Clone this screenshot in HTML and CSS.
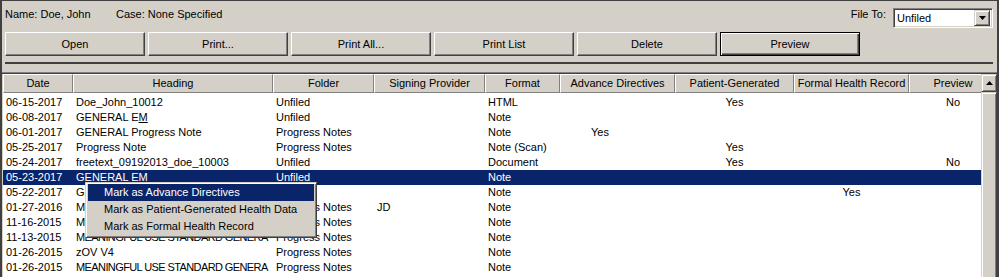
FILE: index.html
```html
<!DOCTYPE html>
<html>
<head>
<meta charset="utf-8">
<link rel="stylesheet" href="styles.css">
</head>
<body>
<div class="window">
  <div class="info">
    <span class="label name">Name: Doe, John</span>
    <span class="label">Case: None Specified</span>
    <span class="spacer"></span>
    <span class="label file-label">File To:</span>
    <div class="combo">
      <span class="combo-text">Unfiled</span>
      <span class="combo-btn"><svg width="7" height="4" viewBox="0 0 7 4"><path d="M0 0H7L3.5 4Z" fill="#000"/></svg></span>
    </div>
  </div>
  <div class="buttons">
    <div class="btn">Open</div>
    <div class="btn">Print...</div>
    <div class="btn">Print All...</div>
    <div class="btn">Print List</div>
    <div class="btn">Delete</div>
    <div class="btn btn-default">Preview</div>
  </div>
  <div class="splitter"></div>
  <div class="list">
    <div class="table">
      <div class="grid header">
        <div class="hcell">Date</div>
        <div class="hcell">Heading</div>
        <div class="hcell">Folder</div>
        <div class="hcell">Signing Provider</div>
        <div class="hcell">Format</div>
        <div class="hcell">Advance Directives</div>
        <div class="hcell">Patient-Generated</div>
        <div class="hcell">Formal Health Record</div>
        <div class="hcell">Preview</div>
      </div>
      <div class="rows">
        <div class="grid row"><div class="cell">06-15-2017</div><div class="cell">Doe_John_10012</div><div class="cell">Unfiled</div><div class="cell"></div><div class="cell">HTML</div><div class="cell adv"></div><div class="cell c">Yes</div><div class="cell c"></div><div class="cell c">No</div></div>
        <div class="grid row"><div class="cell">06-08-2017</div><div class="cell">GENERAL E<u>M</u></div><div class="cell">Unfiled</div><div class="cell"></div><div class="cell">Note</div><div class="cell adv"></div><div class="cell c"></div><div class="cell c"></div><div class="cell c"></div></div>
        <div class="grid row"><div class="cell">06-01-2017</div><div class="cell">GENERAL Progress Note</div><div class="cell">Progress Notes</div><div class="cell"></div><div class="cell">Note</div><div class="cell adv">Yes</div><div class="cell c"></div><div class="cell c"></div><div class="cell c"></div></div>
        <div class="grid row"><div class="cell">05-25-2017</div><div class="cell">Progress Note</div><div class="cell">Progress Notes</div><div class="cell"></div><div class="cell">Note (Scan)</div><div class="cell adv"></div><div class="cell c">Yes</div><div class="cell c"></div><div class="cell c"></div></div>
        <div class="grid row"><div class="cell">05-24-2017</div><div class="cell">freetext_09192013_doe_10003</div><div class="cell">Unfiled</div><div class="cell"></div><div class="cell">Document</div><div class="cell adv"></div><div class="cell c">Yes</div><div class="cell c"></div><div class="cell c">No</div></div>
        <div class="grid row selected"><div class="cell">05-23-2017</div><div class="cell">GENERAL EM</div><div class="cell">Unfiled</div><div class="cell"></div><div class="cell">Note</div><div class="cell adv"></div><div class="cell c"></div><div class="cell c"></div><div class="cell c"></div></div>
        <div class="grid row"><div class="cell">05-22-2017</div><div class="cell">GENERAL EM</div><div class="cell">Unfiled</div><div class="cell"></div><div class="cell">Note</div><div class="cell adv"></div><div class="cell c"></div><div class="cell c">Yes</div><div class="cell c"></div></div>
        <div class="grid row"><div class="cell">01-27-2016</div><div class="cell caps">MEANINGFUL USE STANDARD GENERA</div><div class="cell">Progress Notes</div><div class="cell">JD</div><div class="cell">Note</div><div class="cell adv"></div><div class="cell c"></div><div class="cell c"></div><div class="cell c"></div></div>
        <div class="grid row"><div class="cell">11-16-2015</div><div class="cell caps">MEANINGFUL USE STANDARD GENERA</div><div class="cell">Progress Notes</div><div class="cell"></div><div class="cell">Note</div><div class="cell adv"></div><div class="cell c"></div><div class="cell c"></div><div class="cell c"></div></div>
        <div class="grid row"><div class="cell">11-13-2015</div><div class="cell caps">MEANINGFUL USE STANDARD GENERA</div><div class="cell">Progress Notes</div><div class="cell"></div><div class="cell">Note</div><div class="cell adv"></div><div class="cell c"></div><div class="cell c"></div><div class="cell c"></div></div>
        <div class="grid row"><div class="cell">01-26-2015</div><div class="cell">zOV V4</div><div class="cell">Progress Notes</div><div class="cell"></div><div class="cell">Note</div><div class="cell adv"></div><div class="cell c"></div><div class="cell c"></div><div class="cell c"></div></div>
        <div class="grid row"><div class="cell">01-26-2015</div><div class="cell caps">MEANINGFUL USE STANDARD GENERA</div><div class="cell">Progress Notes</div><div class="cell"></div><div class="cell">Note</div><div class="cell adv"></div><div class="cell c"></div><div class="cell c"></div><div class="cell c"></div></div>
      </div>
    </div>
    <div class="scrollbar">
      <div class="sb-btn"><svg width="7" height="4" viewBox="0 0 7 4"><path d="M3.5 0L7 4H0Z" fill="#000"/></svg></div>
      <div class="sb-thumb"></div>
    </div>
  </div>
</div>
<div class="menu">
  <div class="mi active">Mark as Advance Directives</div>
  <div class="mi">Mark as Patient-Generated Health Data</div>
  <div class="mi">Mark as Formal Health Record</div>
</div>
</body>
</html>
```
FILE: styles.css
```css
* { box-sizing: border-box; }
html, body { margin: 0; padding: 0; }
body {
  width: 999px;
  height: 277px;
  overflow: hidden;
  background: #D4D0C8;
  font-family: "Liberation Sans", Arial, sans-serif;
  font-size: 11px;
  color: #000;
}
.window {
  height: 277px;
  border-top: 1px solid #404040;
  border-left: 2px solid #404040;
  border-right: 2px solid #404040;
  overflow: hidden;
}
.info { display: flex; height: 31px; }
.label { margin-top: 7px; line-height: 13px; white-space: nowrap; }
.name { padding-left: 3px; width: 114px; }
.spacer { flex: 1; }
.file-label { margin-right: 7px; }
.combo {
  margin-top: 7px;
  margin-right: 4px;
  width: 100px;
  height: 20px;
  background: #fff;
  border: 1px solid;
  border-color: #808080 #fff #fff #808080;
  box-shadow: inset 1px 1px #404040, inset -1px -1px #D4D0C8;
  display: flex;
  align-items: center;
  justify-content: space-between;
  padding: 2px;
}
.combo-text { padding-left: 1px; line-height: 14px; }
.combo-btn {
  width: 16px;
  height: 16px;
  background: #D4D0C8;
  border: 1px solid;
  border-color: #D4D0C8 #404040 #404040 #D4D0C8;
  box-shadow: inset 1px 1px #fff, inset -1px -1px #808080;
  display: flex;
  align-items: center;
  justify-content: center;
}
.combo-btn svg { display: block; }
.buttons { display: flex; gap: 3px; padding-left: 3px; height: 24px; }
.btn {
  width: 140px;
  height: 24px;
  background: #D4D0C8;
  border: 1px solid;
  border-color: #fff #404040 #404040 #fff;
  box-shadow: inset -1px -1px #808080;
  display: flex;
  align-items: center;
  justify-content: center;
  padding-bottom: 1px;
}
.btn-default {
  border-color: #000;
  box-shadow: inset 1px 1px #fff, inset -1px -1px #404040, inset -2px -2px #808080;
}
.splitter {
  margin: 6px 4px 0 3px;
  height: 2px;
  background: #404040;
}
.list {
  margin-top: 8px;
  display: flex;
  border-top: 1px solid #808080;
  padding-top: 1px;
  padding-left: 1px;
  box-shadow: inset 0 1px #404040;
  height: 210px;
}
.table {
  width: 978px;
  flex: none;
  overflow: hidden;
  background: #fff;
}
.grid {
  display: grid;
  grid-template-columns: 70px 200px 101px 111px 75px 115px 119px 115px 88px;
  width: 994px;
}
.hcell {
  height: 19px;
  line-height: 17px;
  text-align: center;
  background: #D4D0C8;
  border-top: 1px solid #fff;
  border-left: 1px solid #fff;
  border-right: 1px solid #808080;
  border-bottom: 1px solid #808080;
  white-space: nowrap;
  overflow: hidden;
}
.rows { padding-top: 2px; }
.row { height: 15px; line-height: 15px; }
.cell { padding-left: 3px; overflow: hidden; white-space: nowrap; }
.cell.c { text-align: center; padding-left: 0; }
.cell.adv { padding-left: 31px; }
.cell.caps { letter-spacing: -0.6px; }
.row.selected { background: #0A246A; color: #fff; }
.scrollbar {
  width: 16px;
  flex: none;
  display: flex;
  flex-direction: column;
}
.sb-btn {
  height: 18px;
  background: #D4D0C8;
  border: 1px solid;
  border-color: #D4D0C8 #404040 #404040 #D4D0C8;
  box-shadow: inset 1px 1px #fff, inset -1px -1px #808080;
  display: flex;
  align-items: center;
  justify-content: center;
}
.sb-btn svg { display: block; }
.sb-thumb {
  flex: 1;
  background: #D4D0C8;
  border: 1px solid;
  border-color: #D4D0C8 #404040 #404040 #D4D0C8;
  box-shadow: inset 1px 1px #fff, inset -1px -1px #808080;
}
.menu {
  position: absolute;
  left: 85px;
  top: 182px;
  width: 232px;
  background: #D4D0C8;
  border: 1px solid;
  border-color: #D4D0C8 #404040 #404040 #D4D0C8;
  box-shadow: inset 1px 1px #fff, inset -1px -1px #808080;
  padding: 1px 2px 2px 2px;
}
.mi { height: 17px; line-height: 17px; padding-left: 16px; white-space: nowrap; }
.mi.active { background: #0A246A; color: #fff; }
```
